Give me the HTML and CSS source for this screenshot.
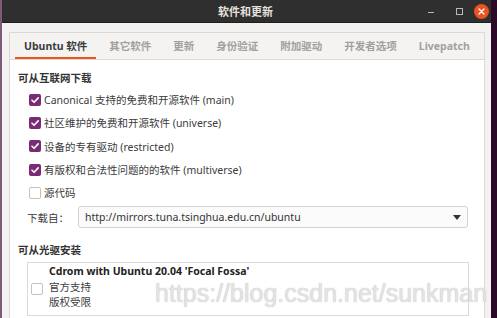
FILE: index.html
```html
<!DOCTYPE html>
<html lang="zh-CN">
<head>
<meta charset="utf-8">
<title>软件和更新</title>
<link rel="stylesheet" href="styles.css">
</head>
<body>
<div class="desk">
  <div class="window">
    <div class="titlebar">
      <span class="title">软件和更新</span>
      <div class="controls">
        <span class="btn-min"></span>
        <span class="btn-max"></span>
        <span class="btn-close">
          <svg width="15" height="15" viewBox="0 0 15 15"><circle cx="7.5" cy="7.5" r="7.5" fill="#e95420"/><path d="M5 5 L10 10 M10 5 L5 10" stroke="#fff" stroke-width="1.3" stroke-linecap="round"/></svg>
        </span>
      </div>
    </div>
    <div class="body">
      <div class="notebook">
        <div class="tabs">
          <span class="tab active">Ubuntu 软件</span>
          <span class="tab">其它软件</span>
          <span class="tab">更新</span>
          <span class="tab">身份验证</span>
          <span class="tab">附加驱动</span>
          <span class="tab">开发者选项</span>
          <span class="tab">Livepatch</span>
        </div>
        <div class="page">
          <div class="heading">可从互联网下载</div>
          <div class="checks">
            <div class="row"><span class="cb on"><svg width="12" height="12" viewBox="0 0 12 12"><path d="M3 6.2 L5.1 8.3 L9.2 3.9" fill="none" stroke="#fff" stroke-width="1.6" stroke-linecap="round" stroke-linejoin="round"/></svg></span><span>Canonical 支持的免费和开源软件 (main)</span></div>
            <div class="row"><span class="cb on"><svg width="12" height="12" viewBox="0 0 12 12"><path d="M3 6.2 L5.1 8.3 L9.2 3.9" fill="none" stroke="#fff" stroke-width="1.6" stroke-linecap="round" stroke-linejoin="round"/></svg></span><span>社区维护的免费和开源软件 (universe)</span></div>
            <div class="row"><span class="cb on"><svg width="12" height="12" viewBox="0 0 12 12"><path d="M3 6.2 L5.1 8.3 L9.2 3.9" fill="none" stroke="#fff" stroke-width="1.6" stroke-linecap="round" stroke-linejoin="round"/></svg></span><span>设备的专有驱动 (restricted)</span></div>
            <div class="row"><span class="cb on"><svg width="12" height="12" viewBox="0 0 12 12"><path d="M3 6.2 L5.1 8.3 L9.2 3.9" fill="none" stroke="#fff" stroke-width="1.6" stroke-linecap="round" stroke-linejoin="round"/></svg></span><span>有版权和合法性问题的的软件 (multiverse)</span></div>
            <div class="row"><span class="cb"></span><span>源代码</span></div>
          </div>
          <div class="source">
            <span class="source-label">下载自：</span>
            <div class="combo">
              <span>http://mirrors.tuna.tsinghua.edu.cn/ubuntu</span>
              <svg width="8" height="5" viewBox="0 0 8 5"><path d="M0 0 L8 0 L4 5 Z" fill="#333"/></svg>
            </div>
          </div>
          <div class="heading heading2">可从光驱安装</div>
          <div class="cdbox">
            <span class="cb"></span>
            <div class="cdtext">
              <div class="cdtitle">Cdrom with Ubuntu 20.04 'Focal Fossa'</div>
              <div>官方支持</div>
              <div>版权受限</div>
            </div>
          </div>
        </div>
      </div>
    </div>
    <div class="watermark">https://blog.csdn.net/sunkman</div>
  </div>
</div>
</body>
</html>
```
FILE: styles.css
```css
html, body {
  margin: 0;
  padding: 0;
}
body {
  width: 497px;
  height: 318px;
  overflow: hidden;
  background: #3a1235;
  font-family: "Noto Sans", "Noto Sans CJK SC", sans-serif;
  font-size: 10.5px;
  color: #3c3c3c;
}
.desk {
  display: flex;
  height: 318px;
  padding-left: 2px;
  background: linear-gradient(to right, #7d5a79 0, #7d5a79 2px, #2a0a27 2px);
}
.window {
  position: relative;
  width: 489px;
  height: 318px;
  background: #f3f2f1;
  overflow: hidden;
}
.titlebar {
  height: 22px;
  background: #2f2f2f;
  border-bottom: 1px solid #1e1e1e;
  display: flex;
  align-items: center;
  justify-content: center;
  position: relative;
}
.title {
  color: #e6e3df;
  font-weight: bold;
  font-size: 11px;
  margin-left: -2px;
}
.controls {
  position: absolute;
  right: 2px;
  top: 3px;
  display: flex;
  align-items: center;
  gap: 11px;
  height: 16px;
}
.btn-min {
  width: 6px;
  height: 1px;
  background: #b8b8b8;
  margin-top: 3px;
}
.btn-max {
  width: 5px;
  height: 5px;
  border: 1.5px solid #b8b8b8;
  margin-left: 11px;
}
.btn-close {
  display: flex;
  width: 15px;
  height: 15px;
}
.body {
  padding: 9px 6px 0 7px;
}
.notebook {
  border: 1px solid #dcd9d5;
  border-bottom: none;
  background: #fff;
  height: 300px;
}
.tabs {
  display: flex;
  gap: 4px;
  padding-left: 5px;
  height: 26px;
  background: #f4f3f2;
  border-bottom: 1px solid #dcd9d5;
  overflow: hidden;
}
.tab {
  flex: none;
  white-space: nowrap;
  display: flex;
  align-items: center;
  padding: 1px 9px 0 9px;
  font-weight: bold;
  color: #a3a09c;
  border-bottom: 2px solid transparent;
}
.tab.active {
  color: #3c3c3c;
  border-bottom-color: #e95420;
}
.page {
  padding: 10px 8px 0 8px;
}
.heading {
  font-weight: bold;
  line-height: 16px;
  color: #333;
}
.checks {
  margin-top: 2px;
  padding-left: 11px;
}
.row {
  height: 23.3px;
  display: flex;
  align-items: center;
  gap: 3px;
}
.cb {
  width: 10px;
  height: 10px;
  border: 1px solid #c4c1bd;
  border-radius: 2px;
  background: #fff;
  display: flex;
  flex: none;
}
.cb.on {
  width: 12px;
  height: 12px;
  border: none;
  background: #7b2a76;
}
.source {
  display: flex;
  align-items: center;
  margin-top: 2px;
  padding-left: 9px;
}
.source-label {
  width: 51px;
}
.combo {
  flex: 1;
  height: 20px;
  margin-right: 8px;
  border: 1px solid #d6d3cf;
  border-radius: 3px;
  display: flex;
  align-items: center;
  justify-content: space-between;
  padding: 0 6px 0 6px;
  color: #333;
  background: #fbfbfb;
}
.heading2 {
  margin-top: 14px;
}
.cdbox {
  margin: 4px 7px 0 9px;
  height: 52px;
  border: 1px solid #dcd9d5;
  display: flex;
  align-items: center;
  gap: 6px;
  padding-left: 3px;
}
.cdtext {
  line-height: 15.5px;
  align-self: flex-start;
  padding-top: 1px;
}
.cdtitle {
  font-weight: bold;
  color: #222;
}
.watermark {
  position: absolute;
  left: 153px;
  top: 279px;
  font-family: "Liberation Sans", sans-serif;
  font-size: 25px;
  color: rgba(238, 238, 238, 0.85);
  text-shadow: 0 0 1px #a8a8a8;
  white-space: nowrap;
}
```
